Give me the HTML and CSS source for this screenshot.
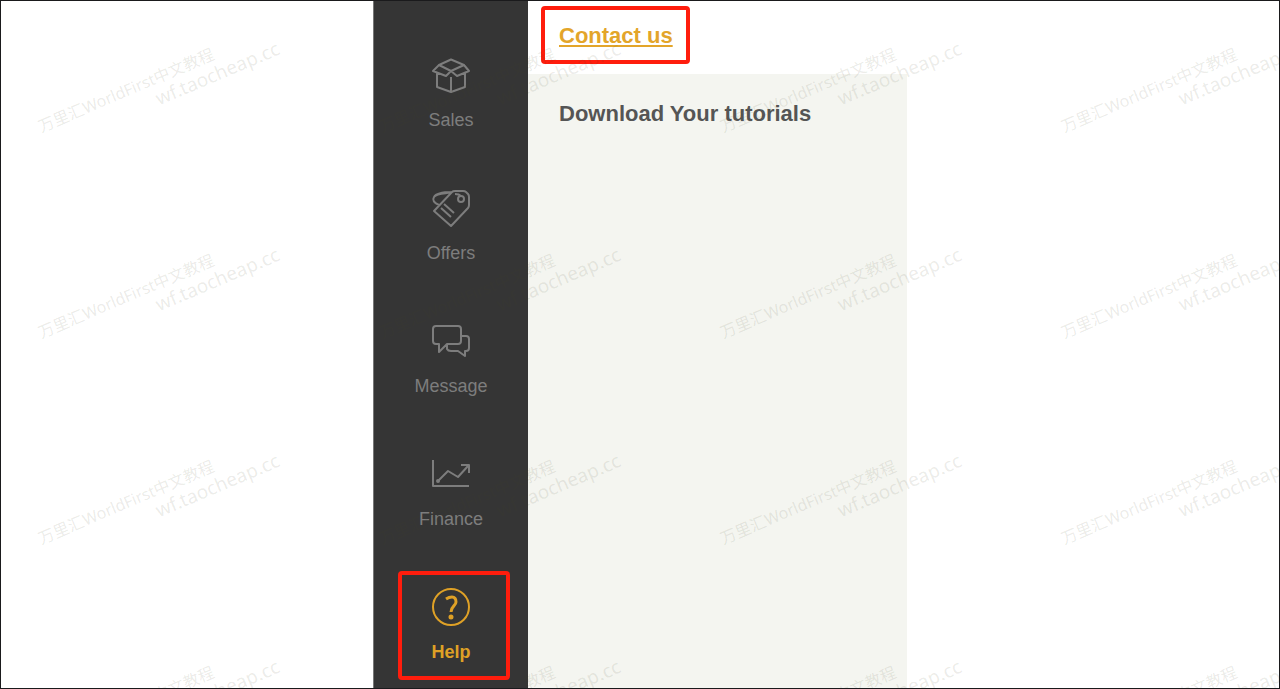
FILE: index.html
```html
<!DOCTYPE html>
<html lang="en">
<head>
<meta charset="utf-8">
<title>Help</title>
<link rel="stylesheet" href="styles.css">
</head>
<body>
<div class="frame">
  <nav class="sidebar" aria-label="Main">
    <a class="item" href="#sales">
      <svg class="icon" viewBox="0 0 40 40" aria-hidden="true"><path d="M8 10 20 4.500 33 10 20 16ZM8 10 2 16 15 21 20 16 26 21 38 16 33 10M6 18.500V32L20 37 34 32V18.500M20 22V37"/></svg>
      <span>Sales</span>
    </a>
    <a class="item" href="#offers">
      <svg class="icon" viewBox="0 0 40 40" aria-hidden="true"><path d="M3 23 21 4Q22 3 24 3H32Q34 3 35 4L37 6Q38 7 38 9V17Q38 19 37 20L20 38ZM8 17C3 15 1 12 3 9C6 4 18 6 21 4C12 4 5 5 3 9M10 20 20 29M13 16 23 25M24 6Q28 6 30 8"/><circle cx="30" cy="11" r="3"/></svg>
      <span>Offers</span>
    </a>
    <a class="item" href="#message">
      <svg class="icon" viewBox="0 0 40 40" aria-hidden="true"><path d="M5 5H27Q30 5 30 8V20Q30 23 27 23H16L8 31V23H5Q2 23 2 20V8Q2 5 5 5ZM30 15H35Q38 15 38 18V27Q38 30 35 30H34V35L27 30H20Q17 30 16 28V23"/></svg>
      <span>Message</span>
    </a>
    <a class="item" href="#finance">
      <svg class="icon" viewBox="0 0 40 40" aria-hidden="true"><path d="M2 6V32H38M7 27 17 17 27 23 37 12M30 11H38V19"/><circle class="dot" cx="7" cy="27" r="1"/></svg>
      <span>Finance</span>
    </a>
    <a class="item item-active" href="#help" aria-current="page">
      <svg class="icon" viewBox="0 0 40 40" aria-hidden="true"><circle cx="20" cy="20" r="18"/><path class="mark" d="M15 12Q18 10 21 10Q25 10 25 15C25 19 20 19 20 25"/><circle class="dot" cx="20" cy="30" r="1.500"/></svg>
      <span>Help</span>
    </a>
  </nav>
  <main class="content">
    <div class="contact"><a class="contact-link" href="#contact">Contact us</a></div>
    <section class="tutorials"><h1 class="title">Download Your tutorials</h1></section>
  </main>
  <div class="watermarks" aria-hidden="true">
    <div class="tile"><div class="stamp"><p class="brand">万里汇WorldFirst中文教程</p><p class="site">wf.taocheap.cc</p></div></div>
    <div class="tile"><div class="stamp"><p class="brand">万里汇WorldFirst中文教程</p><p class="site">wf.taocheap.cc</p></div></div>
    <div class="tile"><div class="stamp"><p class="brand">万里汇WorldFirst中文教程</p><p class="site">wf.taocheap.cc</p></div></div>
    <div class="tile"><div class="stamp"><p class="brand">万里汇WorldFirst中文教程</p><p class="site">wf.taocheap.cc</p></div></div>
    <div class="tile"><div class="stamp"><p class="brand">万里汇WorldFirst中文教程</p><p class="site">wf.taocheap.cc</p></div></div>
    <div class="tile"><div class="stamp"><p class="brand">万里汇WorldFirst中文教程</p><p class="site">wf.taocheap.cc</p></div></div>
    <div class="tile"><div class="stamp"><p class="brand">万里汇WorldFirst中文教程</p><p class="site">wf.taocheap.cc</p></div></div>
    <div class="tile"><div class="stamp"><p class="brand">万里汇WorldFirst中文教程</p><p class="site">wf.taocheap.cc</p></div></div>
    <div class="tile"><div class="stamp"><p class="brand">万里汇WorldFirst中文教程</p><p class="site">wf.taocheap.cc</p></div></div>
    <div class="tile"><div class="stamp"><p class="brand">万里汇WorldFirst中文教程</p><p class="site">wf.taocheap.cc</p></div></div>
    <div class="tile"><div class="stamp"><p class="brand">万里汇WorldFirst中文教程</p><p class="site">wf.taocheap.cc</p></div></div>
    <div class="tile"><div class="stamp"><p class="brand">万里汇WorldFirst中文教程</p><p class="site">wf.taocheap.cc</p></div></div>
    <div class="tile"><div class="stamp"><p class="brand">万里汇WorldFirst中文教程</p><p class="site">wf.taocheap.cc</p></div></div>
    <div class="tile"><div class="stamp"><p class="brand">万里汇WorldFirst中文教程</p><p class="site">wf.taocheap.cc</p></div></div>
    <div class="tile"><div class="stamp"><p class="brand">万里汇WorldFirst中文教程</p><p class="site">wf.taocheap.cc</p></div></div>
    <div class="tile"><div class="stamp"><p class="brand">万里汇WorldFirst中文教程</p><p class="site">wf.taocheap.cc</p></div></div>
  </div>
</div>
</body>
</html>
```
FILE: styles.css
```css
* {
  box-sizing: border-box;
}

body,
p,
h1 {
  margin: 0;
}

body {
  background: #fff;
  font-family: "Liberation Sans", Arial, sans-serif;
}

.frame {
  position: relative;
  display: grid;
  grid-template-columns: 1fr 155px 379px 1fr;
  min-height: 100vh;
  border: 1px solid #1a1a1c;
}

.sidebar {
  grid-column: 2;
  display: flex;
  flex-direction: column;
  align-items: center;
  gap: 24px;
  padding: 38px 0 8px 6px;
  background: #353535;
  border-left: 1px solid #777;
}

.item {
  display: flex;
  flex-direction: column;
  align-items: center;
  gap: 13px;
  width: 112px;
  height: 109px;
  padding: 12px 6px 12px 0;
  border: 4px solid transparent;
  border-radius: 4px;
  color: #7d7d7d;
  font-size: 18px;
  line-height: 24px;
  text-decoration: none;
}

.item-active {
  border-color: #ff1d0d;
  color: #dfa126;
  font-weight: bold;
}

.icon {
  width: 40px;
  height: 40px;
  flex: none;
  fill: none;
  stroke: currentColor;
  stroke-width: 2;
  stroke-linejoin: round;
}

.icon .mark {
  stroke-width: 3;
}

.icon .dot {
  fill: currentColor;
}

.content {
  grid-column: 3;
  display: flex;
  flex-direction: column;
}

.contact {
  padding: 5px 13px 10px;
}

.contact-link {
  display: inline-block;
  padding: 13px 13px 11px 14px;
  border: 4px solid #ff1d0d;
  border-radius: 4px;
  color: #e3a52a;
  font-size: 22px;
  font-weight: bold;
  line-height: 26px;
  text-decoration-thickness: 2px;
  text-underline-offset: 2px;
}

.tutorials {
  flex: 1;
  padding: 27px 31px;
  background: #f4f5f0;
}

.title {
  color: #555;
  font-size: 22px;
  line-height: 26px;
}

/* Repeating diagonal stamp laid over the whole page */
.watermarks {
  position: absolute;
  inset: 0;
  display: grid;
  grid-template-columns: repeat(4, 341px);
  grid-auto-rows: 206px;
  overflow: hidden;
  pointer-events: none;
  color: rgba(70, 70, 40, 0.11);
  font-family: "Noto Sans", "Noto Sans CJK SC", sans-serif;
  white-space: nowrap;
}

.tile {
  padding: 117px 0 0 34px;
}

.stamp {
  width: 250px;
  transform: rotate(-23deg);
  transform-origin: 0 0;
}

.brand {
  font-size: 16px;
  line-height: 20px;
}

.site {
  padding-left: 119px;
  font-size: 19px;
  line-height: 20px;
}
```
